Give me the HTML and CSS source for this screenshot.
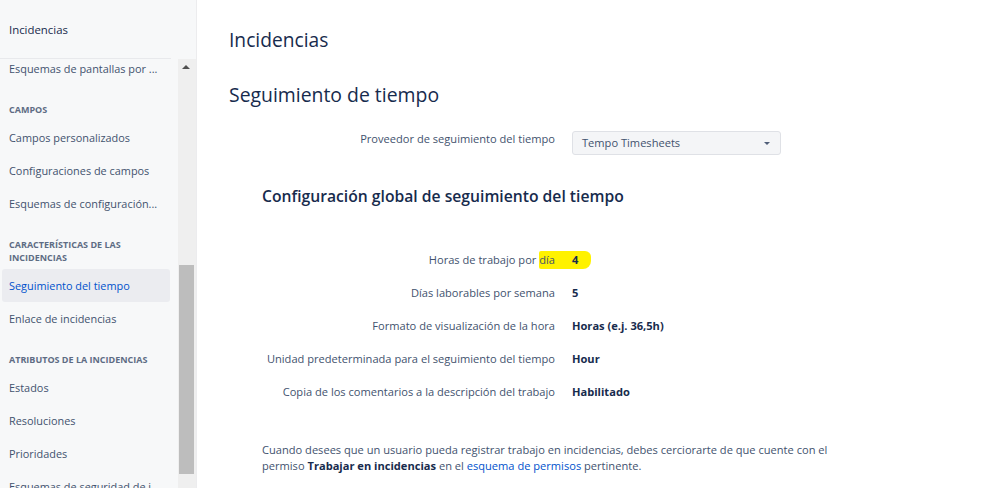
FILE: index.html
```html
<!DOCTYPE html>
<html lang="es">
<head>
    <meta charset="UTF-8">
    <title>Seguimiento de tiempo</title>
    <link rel="stylesheet" href="styles.css">
</head>
<body>
    <div class="sidebar">
        <div class="sidebar-header">
            <span class="sidebar-title">Incidencias</span>
        </div>
        <div class="sidebar-body">
            <div class="nav-scroll">
                <ul class="nav-list">
                    <li class="nav-item">Esquemas de pantallas por ...</li>
                    <li class="nav-heading">Campos</li>
                    <li class="nav-item">Campos personalizados</li>
                    <li class="nav-item">Configuraciones de campos</li>
                    <li class="nav-item">Esquemas de configuración...</li>
                    <li class="nav-heading">Características de las incidencias</li>
                    <li class="nav-item active">Seguimiento del tiempo</li>
                    <li class="nav-item">Enlace de incidencias</li>
                    <li class="nav-heading">Atributos de la incidencias</li>
                    <li class="nav-item">Estados</li>
                    <li class="nav-item">Resoluciones</li>
                    <li class="nav-item">Prioridades</li>
                    <li class="nav-item">Esquemas de seguridad de i...</li>
                </ul>
            </div>
            <div class="scrollbar">
                <span class="scroll-arrow"></span>
                <div class="scroll-thumb"></div>
            </div>
        </div>
    </div>

    <div class="main">
        <h1 class="page-title">Incidencias</h1>
        <h2 class="section-title">Seguimiento de tiempo</h2>

        <div class="field-row provider-row">
            <label class="field-label">Proveedor de seguimiento del tiempo</label>
            <div class="select">
                <span>Tempo Timesheets</span>
                <span class="caret"></span>
            </div>
        </div>

        <h3 class="sub-title">Configuración global de seguimiento del tiempo</h3>

        <div class="settings">
            <div class="field-row">
                <span class="marker"></span>
                <span class="field-label">Horas de trabajo por día</span>
                <span class="field-value">4</span>
            </div>
            <div class="field-row">
                <span class="field-label">Días laborables por semana</span>
                <span class="field-value">5</span>
            </div>
            <div class="field-row">
                <span class="field-label">Formato de visualización de la hora</span>
                <span class="field-value">Horas (e.j. 36,5h)</span>
            </div>
            <div class="field-row">
                <span class="field-label">Unidad predeterminada para el seguimiento del tiempo</span>
                <span class="field-value">Hour</span>
            </div>
            <div class="field-row">
                <span class="field-label">Copia de los comentarios a la descripción del trabajo</span>
                <span class="field-value">Habilitado</span>
            </div>
        </div>

        <p class="note">Cuando desees que un usuario pueda registrar trabajo en incidencias, debes cerciorarte de que cuente con el<br>permiso <strong>Trabajar en incidencias</strong> en el <a href="#">esquema de permisos</a> pertinente.</p>
    </div>
</body>
</html>
```

FILE: styles.css
```css
* {
    margin: 0;
    padding: 0;
    box-sizing: border-box;
}

body {
    font-family: "Open Sans", "Noto Sans", sans-serif;
    background: #ffffff;
    color: #42526e;
    display: flex;
    height: 488px;
    overflow: hidden;
}

/* Sidebar */

.sidebar {
    width: 197px;
    flex-shrink: 0;
    background: #f7f8f9;
    border-right: 1px solid #ececee;
    display: flex;
    flex-direction: column;
}

.sidebar-header {
    height: 59px;
    padding-top: 22px;
    position: relative;
}

.sidebar-header::after {
    content: "";
    position: absolute;
    left: 0;
    bottom: 0;
    width: 171px;
    height: 1px;
    background: #e8e9ec;
}

.sidebar-title {
    display: block;
    padding-left: 9px;
    font-size: 11.4px;
    line-height: 16px;
    color: #172b4d;
}

.sidebar-body {
    flex: 1;
    display: flex;
    overflow: hidden;
}

.nav-scroll {
    width: 178px;
    overflow: hidden;
}

.nav-list {
    list-style: none;
    margin-top: -7px;
}

.nav-item {
    height: 33px;
    line-height: 33px;
    margin: 0 8px 0 2px;
    padding-left: 7px;
    font-size: 10.9px;
    color: #42526e;
    white-space: nowrap;
    border-radius: 3px;
}

.nav-item.active {
    background: #ebecf0;
    color: #0052cc;
}

.nav-heading {
    margin-top: 18px;
    padding: 0 10px 5px 9px;
    font-size: 9px;
    line-height: 13px;
    font-weight: 700;
    text-transform: uppercase;
    color: #5e6c84;
}

.scrollbar {
    width: 18px;
    background: #efefef;
    position: relative;
}

.scroll-arrow {
    position: absolute;
    left: 4px;
    top: 6px;
    border-left: 4px solid transparent;
    border-right: 4px solid transparent;
    border-bottom: 4px solid #505050;
}

.scroll-thumb {
    position: absolute;
    left: 1px;
    top: 206px;
    width: 15px;
    height: 209px;
    background: #bdbdbd;
}

/* Main */

.main {
    flex: 1;
    padding: 28px 0 0 32px;
}

.page-title {
    font-size: 19.2px;
    line-height: 24px;
    font-weight: 500;
    color: #172b4d;
}

.section-title {
    margin-top: 30px;
    font-size: 19.4px;
    line-height: 26px;
    font-weight: 500;
    color: #172b4d;
}

.field-row {
    display: flex;
    align-items: flex-start;
    gap: 17px;
    height: 33px;
    line-height: 33px;
    font-size: 11.1px;
    position: relative;
}

.field-label {
    width: 326px;
    flex-shrink: 0;
    text-align: right;
    white-space: nowrap;
    color: #42526e;
}

.field-value {
    font-weight: 700;
    color: #172b4d;
    white-space: nowrap;
}

.provider-row {
    margin-top: 23px;
    height: 24px;
    line-height: 16px;
}

.select {
    width: 209px;
    height: 24px;
    padding: 0 9px;
    background: #f4f5f7;
    border: 1px solid #dfe1e6;
    border-radius: 3px;
    display: flex;
    align-items: center;
    justify-content: space-between;
    color: #42526e;
    line-height: 22px;
}

.caret {
    border-left: 3.5px solid transparent;
    border-right: 3.5px solid transparent;
    border-top: 3.5px solid #505f79;
    margin-right: 1px;
}

.sub-title {
    margin: 30px 0 0 33px;
    font-size: 15.7px;
    line-height: 22px;
    font-weight: 600;
    color: #172b4d;
}

.settings {
    margin-top: 36px;
}

.marker {
    position: absolute;
    left: 310px;
    top: 8px;
    width: 52px;
    height: 18px;
    background: #fff200;
    border-radius: 2px 6px 8px 2px;
    z-index: -1;
}

.note {
    margin: 34px 0 0 33px;
    font-size: 11.1px;
    line-height: 16px;
    color: #42526e;
}

.note strong {
    color: #172b4d;
}

.note a {
    color: #0052cc;
    text-decoration: none;
}
```
